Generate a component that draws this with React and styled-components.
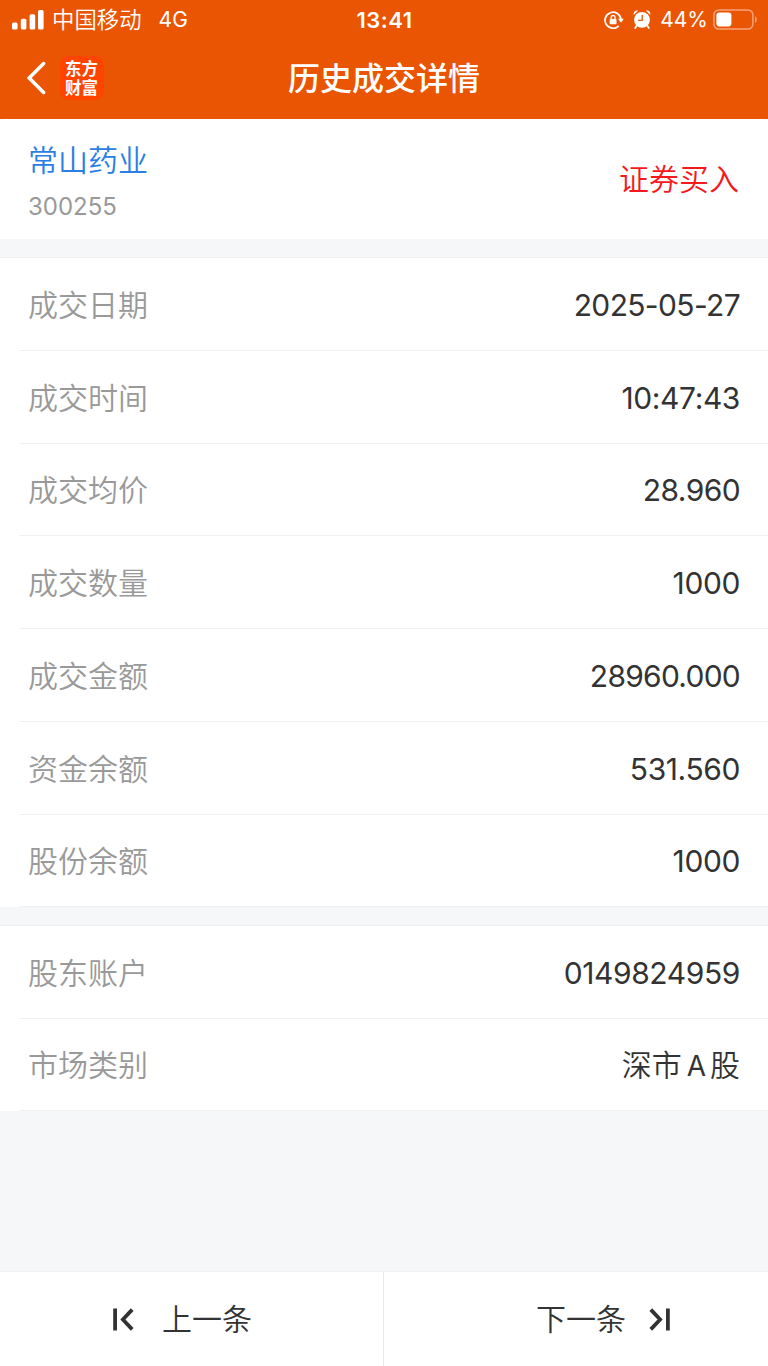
import React from 'react';
import styled, { createGlobalStyle } from 'styled-components';

const Latin = styled.span`
  margin: 0 4px 0 5px;
  font-size: 28px;
  font-weight: 400;
`;

const tradeRows = [
  { label: '成交日期', value: '2025-05-27', spacing: '-0.65px' },
  { label: '成交时间', value: '10:47:43' },
  { label: '成交均价', value: '28.960', spacing: '-0.6px' },
  { label: '成交数量', value: '1000' },
  { label: '成交金额', value: '28960.000', spacing: '-0.75px' },
  { label: '资金余额', value: '531.560' },
  { label: '股份余额', value: '1000' },
];

const accountRows = [
  { label: '股东账户', value: '0149824959' },
  {
    label: '市场类别',
    value: (
      <>
        深市<Latin>A</Latin>股
      </>
    ),
    spacing: '0',
    weight: 350,
  },
];

const SignalIcon = () => (
  <svg width="32" height="20" viewBox="0 0 32 20" fill="#fff">
    <rect x="0" y="12.5" width="5.6" height="7" rx="1.6" />
    <rect x="8.8" y="8.8" width="5.6" height="10.7" rx="1.6" />
    <rect x="17.6" y="4.2" width="5.6" height="15.3" rx="1.6" />
    <rect x="26" y="0" width="5.6" height="19.5" rx="1.6" />
  </svg>
);

const RotationLockIcon = () => (
  <svg width="20" height="20" viewBox="0 0 20 20" fill="none" stroke="#fff">
    <path d="M17 9.4A8 8 0 1 0 14.8 15.8" strokeWidth="1.7" />
    <path d="M14 8.8h5.8l-2.8 4z" fill="#fff" stroke="none" />
    <rect x="5.7" y="8.9" width="6.8" height="5.4" rx="0.8" fill="#fff" stroke="none" />
    <path d="M7.2 9V7.4a1.9 1.9 0 0 1 3.8 0V9" strokeWidth="1.3" />
  </svg>
);

const AlarmIcon = () => (
  <svg width="18" height="19" viewBox="0 0 18 19" fill="none" stroke="#fff">
    <circle cx="9" cy="9.8" r="7.9" fill="#fff" stroke="none" />
    <path d="M0.6 5C0.2 2.2 2.2 0.2 5 0.7zM17.4 5c0.4-2.8-1.6-4.8-4.4-4.3z" fill="#fff" stroke="none" />
    <path d="M3.8 15.6L2.2 18M14.2 15.6l1.6 2.4" strokeWidth="1.8" strokeLinecap="round" />
    <path d="M9.2 5v5.4H5" stroke="#ea5504" strokeWidth="1.3" />
  </svg>
);

const BatteryIcon = () => (
  <svg width="44" height="22" viewBox="0 0 44 22" fill="none">
    <rect x="0.9" y="0.9" width="39" height="19.2" rx="5" stroke="#f5a27a" strokeWidth="1.5" />
    <rect x="3.4" y="3.4" width="15" height="14" rx="2.8" fill="#fff" />
    <path d="M42 7.2c2.4 1 2.4 5.8 0 6.8z" fill="#f5a27a" />
  </svg>
);

const BackIcon = () => (
  <svg width="20" height="34" viewBox="0 0 20 34" fill="none" stroke="#fff" strokeWidth="3.5">
    <path d="M17.6 2.6L3.2 17l14.4 14.4" strokeLinecap="round" strokeLinejoin="miter" />
  </svg>
);

const FirstIcon = () => (
  <svg width="21" height="23" viewBox="0 0 21 23" fill="none" stroke="#333" strokeWidth="3.8">
    <path d="M2.1 0.4v22.2M19.2 1.6L9.9 11.5l9.3 9.9" />
  </svg>
);

const LastIcon = () => (
  <svg width="21" height="23" viewBox="0 0 21 23" fill="none" stroke="#333" strokeWidth="3.8">
    <path d="M18.9 0.4v22.2M1.8 1.6l9.3 9.9-9.3 9.9" />
  </svg>
);

const DetailGroup = ({ rows, gap }) => (
  <Group $gap={gap}>
    {rows.map((row) => (
      <Row key={row.label}>
        <Label>{row.label}</Label>
        <Value $spacing={row.spacing} $weight={row.weight}>
          {row.value}
        </Value>
      </Row>
    ))}
  </Group>
);

const App = () => {
  return (
    <Page>
      <GlobalStyle />
      <Header>
        <StatusBar>
          <StatusSide>
            <SignalIcon />
            <Carrier>中国移动</Carrier>
            <Network>4G</Network>
          </StatusSide>
          <Clock>13:41</Clock>
          <StatusSide $end>
            <RotationLockIcon />
            <AlarmIcon />
            <Percent>44%</Percent>
            <BatteryIcon />
          </StatusSide>
        </StatusBar>
        <NavBar>
          <NavSide>
            <BackIcon />
            <Logo>东方财富</Logo>
          </NavSide>
          <Title>历史成交详情</Title>
          <NavSide />
        </NavBar>
      </Header>
      <Summary>
        <div>
          <StockName>常山药业</StockName>
          <StockCode>300255</StockCode>
        </div>
        <Direction>证券买入</Direction>
      </Summary>
      <DetailGroup rows={tradeRows} gap="18px" />
      <DetailGroup rows={accountRows} gap="17.5px" />
      <Footer>
        <PagerButton>
          <FirstIcon />
          <span>上一条</span>
        </PagerButton>
        <PagerButton $next>
          <span>下一条</span>
          <LastIcon />
        </PagerButton>
      </Footer>
    </Page>
  );
};

const GlobalStyle = createGlobalStyle`
  * {
    box-sizing: border-box;
  }

  body {
    margin: 0;
    background: #f6f7f9;
    font-family: Inter, 'Noto Sans CJK SC', sans-serif;
  }
`;

const Page = styled.div`
  display: flex;
  flex-direction: column;
  width: 768px;
  height: 1366px;
  overflow: hidden;
  background: #f6f7f9;
  color: #333;
`;

const Header = styled.header`
  height: 119px;
  background: #ea5504;
  color: #fff;
`;

const StatusBar = styled.div`
  display: grid;
  grid-template-columns: 1fr auto 1fr;
  align-items: center;
  height: 38px;
  padding: 0 11px 0 12px;
  font-size: 22px;
  line-height: 38px;

  span {
    padding-top: 1px;
  }
`;

const StatusSide = styled.div`
  display: flex;
  align-items: center;
  justify-content: ${({ $end }) => ($end ? 'flex-end' : 'flex-start')};
  gap: ${({ $end }) => ($end ? '9px' : '0')};
`;

const Carrier = styled.span`
  margin-left: 8px;
  font-size: 22.4px;
  font-weight: 350;
`;

const Network = styled.span`
  margin-left: 17px;
  font-size: 21px;
`;

const Clock = styled.span`
  font-weight: 600;
  letter-spacing: 0.5px;
`;

const Percent = styled.span`
  margin-right: -4px;
  font-size: 21px;
`;

const NavBar = styled.div`
  display: grid;
  grid-template-columns: 1fr auto 1fr;
  align-items: center;
  height: 80px;
  padding: 0 26px;
`;

const NavSide = styled.div`
  display: flex;
  align-items: center;
  gap: 14px;
`;

const Logo = styled.div`
  width: 44px;
  height: 44px;
  padding: 3px 5px;
  border-radius: 9px;
  background: #ff4400;
  font-family: 'Noto Sans CJK SC', sans-serif;
  font-size: 16.5px;
  font-weight: 700;
  line-height: 19px;
`;

const Title = styled.h1`
  margin: 2px 0 0;
  font-size: 32px;
  font-weight: 500;
  line-height: 44px;
`;

const Summary = styled.section`
  display: flex;
  align-items: center;
  justify-content: space-between;
  height: 120px;
  padding: 0 29px 0 28px;
  border-radius: 4px 4px 0 0;
  background: #fff;
`;

const StockName = styled.div`
  padding-top: 8px;
  color: #2a7ee4;
  font-size: 30px;
  font-weight: 350;
  line-height: 46px;
`;

const StockCode = styled.div`
  color: #999;
  font-size: 24px;
  line-height: 47px;
`;

const Direction = styled.div`
  padding-bottom: 5px;
  color: #f5191d;
  font-size: 30px;
  font-weight: 350;
`;

const Group = styled.section`
  margin-top: ${({ $gap }) => $gap};
  border-top: 1px solid #edeef0;
  background: #fff;
`;

const Row = styled.div`
  display: flex;
  align-items: center;
  justify-content: space-between;
  height: 92.75px;
  margin-left: 19px;
  padding: 2px 28px 0 9px;
  border-bottom: 1px solid #f1f1f3;
  font-size: 30px;
  line-height: 44px;
`;

const Label = styled.span`
  color: #999;
  font-weight: 350;
`;

const Value = styled.span`
  font-weight: ${({ $weight }) => $weight || 400};
  letter-spacing: ${({ $spacing }) => $spacing || '-0.4px'};
`;

const Footer = styled.footer`
  display: grid;
  grid-template-columns: 383px 1fr;
  height: 95px;
  margin-top: auto;
  border-top: 1px solid #f0f1f3;
  background: #fff;
`;

const PagerButton = styled.button`
  display: flex;
  align-items: center;
  justify-content: center;
  gap: ${({ $next }) => ($next ? '23px' : '28px')};
  padding: ${({ $next }) => ($next ? '0 0 0 54px' : '0 18px 0 0')};
  border: 0;
  border-left: ${({ $next }) => ($next ? '1px solid #e9e9eb' : '0')};
  background: none;
  color: #333;
  font-family: inherit;
  font-size: 30px;
  font-weight: 350;

  span {
    padding-bottom: 4px;
  }
`;

export default App;
